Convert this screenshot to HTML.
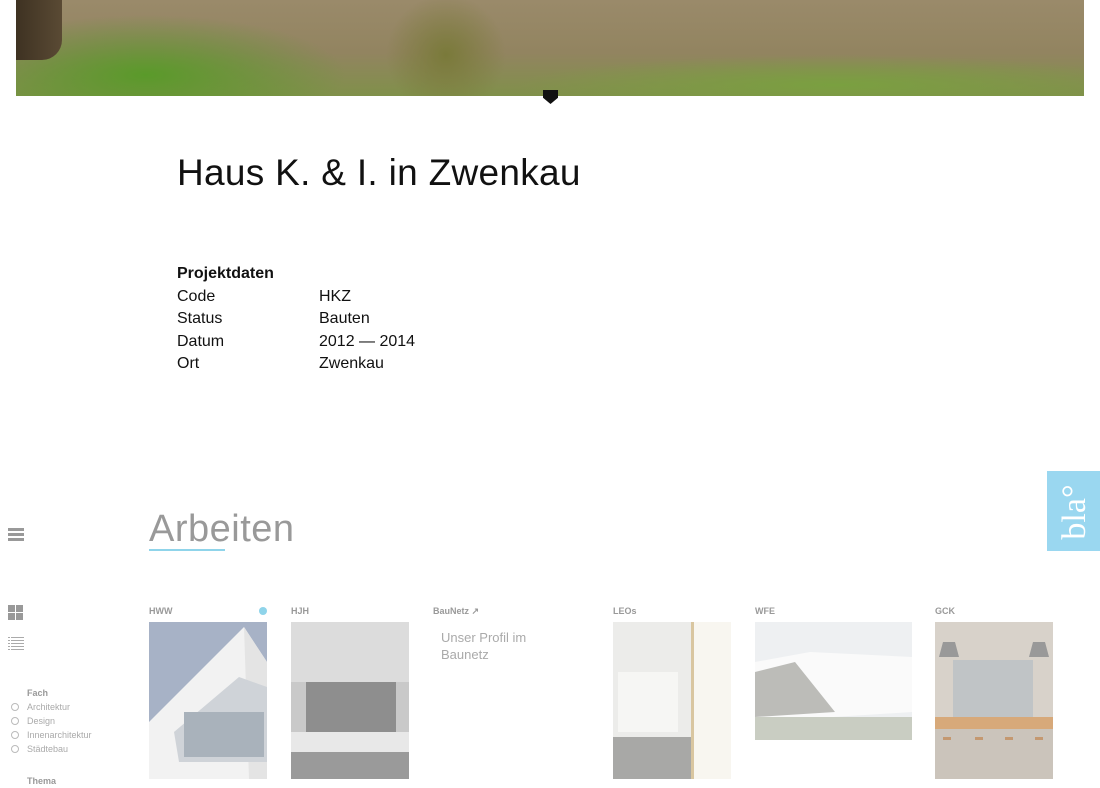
<!DOCTYPE html>
<html><head><meta charset="utf-8"><style>
*{margin:0;padding:0;box-sizing:border-box}
body{width:1100px;height:786px;overflow:hidden;background:#fff;font-family:"Liberation Sans",sans-serif;position:relative;color:#111}
.abs{position:absolute}
.hero{left:16px;top:0;width:1068px;height:96px;background:
radial-gradient(ellipse 60px 60px at 430px 55px,#7a7a3a,transparent),
radial-gradient(ellipse 200px 60px at 130px 75px,#5a9a2a,transparent),
radial-gradient(ellipse 320px 30px at 820px 85px,#7aa040,transparent),
linear-gradient(180deg,#9a8a6a 0%,#928460 55%,#80904a 100%);}
.tree{left:16px;top:0;width:46px;height:60px;background:linear-gradient(90deg,#3e3222,#5a4a34);border-radius:0 0 20px 0}
.pin{left:543px;top:90px;width:15px;height:14px;background:#111;clip-path:polygon(0 0,100% 0,100% 55%,50% 100%,0 55%)}
h1{position:absolute;left:177px;top:152px;font-weight:normal;font-size:37px;letter-spacing:0.3px;color:#111}
.pd{left:177px;top:263px;font-size:16px;line-height:22.5px}
.pd b{display:block}
.pd span{display:inline-block;width:142px}
.arb{left:149px;top:508px;font-size:38px;color:#999;font-weight:normal;letter-spacing:0.5px}
.ul{left:149px;top:549px;width:76px;height:2px;background:#8fd4ea}
.bla{left:1047px;top:471px;width:53px;height:80px;background:#9ad7f0}
.bla div{position:absolute;left:-12px;top:24px;width:80px;text-align:center;transform:rotate(-90deg);color:#fff;font-family:"Liberation Serif",serif;font-size:34px;line-height:34px}
.lbl{font-size:9px;font-weight:bold;color:#999;top:606px}
.card{top:622px}
.side{left:27px;font-size:9px;color:#aaa;line-height:14px}
.side i{position:absolute;left:-16px;width:8px;height:8px;border:1px solid #bbb;border-radius:50%;margin-top:3px}
</style></head><body>
<div class="abs hero"></div><div class="abs tree"></div>
<div class="abs pin"></div>
<h1>Haus K. &amp; I. in Zwenkau</h1>
<div class="abs pd"><b>Projektdaten</b>
<span>Code</span>HKZ<br><span>Status</span>Bauten<br><span>Datum</span>2012 — 2014<br><span>Ort</span>Zwenkau</div>
<div class="abs arb">Arbeiten</div><div class="abs ul"></div>
<div class="abs bla"><div>bla°</div></div>
<svg class="abs" style="left:8px;top:528px" width="16" height="14"><rect y="0" width="16" height="3" fill="#999"/><rect y="5" width="16" height="3" fill="#999"/><rect y="10" width="16" height="3" fill="#999"/></svg>
<svg class="abs" style="left:8px;top:605px" width="16" height="16"><rect width="7" height="7" fill="#999"/><rect x="8" width="7" height="7" fill="#999"/><rect y="8" width="7" height="7" fill="#999"/><rect x="8" y="8" width="7" height="7" fill="#999"/></svg>
<svg class="abs" style="left:8px;top:636px" width="16" height="16" fill="#aaa"><rect y="1" width="2" height="1"/><rect x="3" y="1" width="13" height="1"/><rect y="4" width="2" height="1"/><rect x="3" y="4" width="13" height="1"/><rect y="7" width="2" height="1"/><rect x="3" y="7" width="13" height="1"/><rect y="10" width="2" height="1"/><rect x="3" y="10" width="13" height="1"/><rect y="13" width="2" height="1"/><rect x="3" y="13" width="13" height="1"/></svg>
<div class="abs side" style="top:686px;font-weight:bold;color:#999">Fach</div>
<div class="abs side" style="top:700px"><i></i>Architektur<br><i></i>Design<br><i></i>Innenarchitektur<br><i></i>Städtebau</div>
<div class="abs side" style="top:774px;font-weight:bold;color:#999">Thema</div>
<div class="abs lbl" style="left:149px">HWW</div>
<div class="abs" style="left:259px;top:607px;width:8px;height:8px;border-radius:50%;background:#8fd4ea"></div>
<svg class="abs card" style="left:149px;width:118px;height:157px" width="118" height="157"><rect width="118" height="157" fill="#a7b2c6"/><polygon points="0,100 95,5 118,40 118,157 0,157" fill="#f2f2f2"/><polygon points="95,5 118,40 118,157 100,157" fill="#e4e4e4"/><polygon points="25,110 90,55 118,65 118,140 30,140" fill="#cfd3d8"/><rect x="35" y="90" width="80" height="45" fill="#a9b2bb"/></svg>
<div class="abs lbl" style="left:291px">HJH</div>
<svg class="abs card" style="left:291px;width:118px;height:157px" width="118" height="157"><rect width="118" height="157" fill="#c9c9c9"/><rect x="0" y="0" width="118" height="60" fill="#dcdcdc"/><rect x="15" y="60" width="90" height="50" fill="#8e8e8e"/><rect x="0" y="110" width="118" height="20" fill="#e8e8e8"/><rect x="0" y="130" width="118" height="27" fill="#9a9a9a"/></svg>
<div class="abs lbl" style="left:433px">BauNetz ↗</div>
<div class="abs" style="left:441px;top:629px;font-size:13px;line-height:17px;color:#aaa">Unser Profil im<br>Baunetz</div>
<div class="abs lbl" style="left:613px">LEOs</div>
<svg class="abs card" style="left:613px;width:118px;height:157px" width="118" height="157"><rect width="118" height="157" fill="#ececea"/><rect x="5" y="50" width="60" height="60" fill="#f6f6f4"/><rect x="0" y="115" width="80" height="42" fill="#a8a8a6"/><rect x="80" y="0" width="38" height="157" fill="#f8f6f0"/><rect x="78" y="0" width="3" height="157" fill="#d9c6a0"/></svg>
<div class="abs lbl" style="left:755px">WFE</div>
<svg class="abs card" style="left:755px;width:157px;height:118px" width="157" height="118"><rect width="157" height="118" fill="#eef0f2"/><polygon points="0,40 55,30 157,35 157,90 0,100" fill="#fafafa"/><polygon points="0,50 40,40 80,90 0,95" fill="#bcbcb8"/><rect y="95" width="157" height="23" fill="#c9cdc2"/></svg>
<div class="abs lbl" style="left:935px">GCK</div>
<svg class="abs card" style="left:935px;width:118px;height:157px" width="118" height="157"><rect width="118" height="157" fill="#d8d2ca"/><rect x="18" y="38" width="80" height="60" fill="#c0c4c6"/><polygon points="8,20 20,20 24,35 4,35" fill="#999"/><polygon points="98,20 110,20 114,35 94,35" fill="#999"/><rect x="0" y="95" width="118" height="12" fill="#d7a97a"/><rect x="0" y="107" width="118" height="50" fill="#cbc4bb"/><rect x="8" y="115" width="8" height="3" fill="#c49870"/><rect x="40" y="115" width="8" height="3" fill="#c49870"/><rect x="70" y="115" width="8" height="3" fill="#c49870"/><rect x="100" y="115" width="8" height="3" fill="#c49870"/></svg>
</body></html>
